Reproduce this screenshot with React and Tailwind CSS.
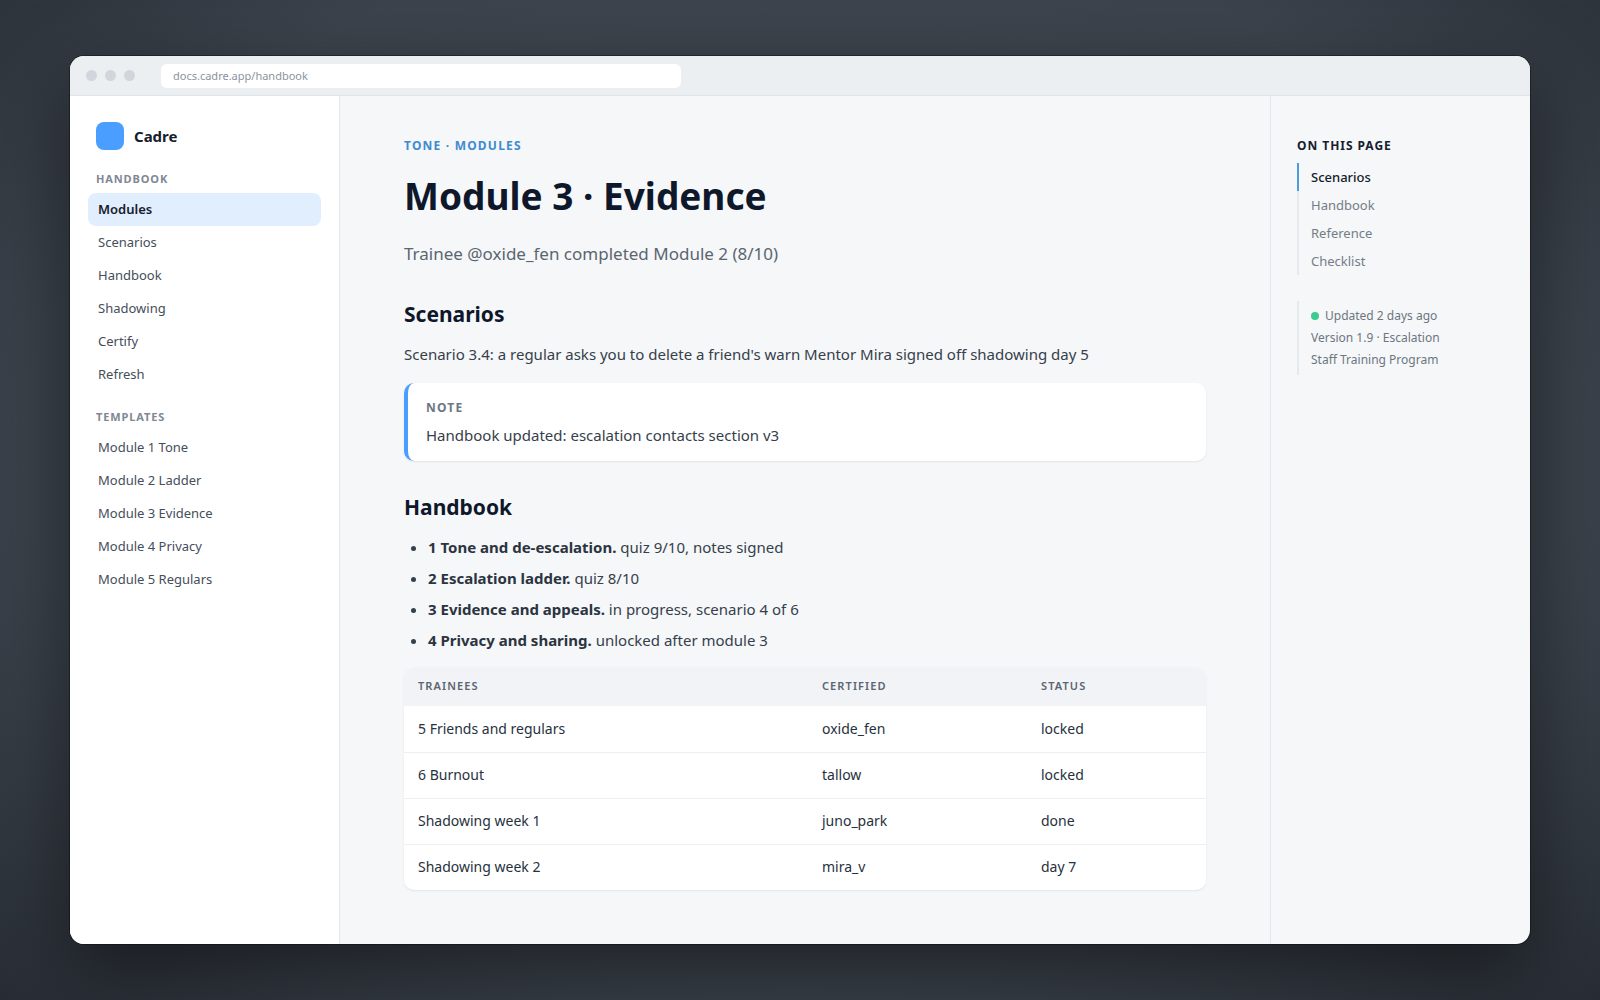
const nav = [
  { title: 'Handbook', items: ['Modules', 'Scenarios', 'Handbook', 'Shadowing', 'Certify', 'Refresh'] },
  { title: 'Templates', items: ['Module 1 Tone', 'Module 2 Ladder', 'Module 3 Evidence', 'Module 4 Privacy', 'Module 5 Regulars'] },
];

const checklist = [
  ['1 Tone and de-escalation.', 'quiz 9/10, notes signed'],
  ['2 Escalation ladder.', 'quiz 8/10'],
  ['3 Evidence and appeals.', 'in progress, scenario 4 of 6'],
  ['4 Privacy and sharing.', 'unlocked after module 3'],
];

const rows = [
  ['5 Friends and regulars', 'oxide_fen', 'locked'],
  ['6 Burnout', 'tallow', 'locked'],
  ['Shadowing week 1', 'juno_park', 'done'],
  ['Shadowing week 2', 'mira_v', 'day 7'],
];

const toc = ['Scenarios', 'Handbook', 'Reference', 'Checklist'];

function BrowserBar() {
  return (
    <div className="flex h-10 shrink-0 items-center border-b border-[#e1e5e9] bg-[#eceff2] px-4">
      <div className="flex gap-2">
        <span className="size-[11px] rounded-full bg-[#d2d6dc]" />
        <span className="size-[11px] rounded-full bg-[#d2d6dc]" />
        <span className="size-[11px] rounded-full bg-[#d2d6dc]" />
      </div>
      <input
        type="text"
        aria-label="Address"
        defaultValue="docs.cadre.app/handbook"
        className="ml-[26px] h-6 w-full max-w-[520px] rounded-md bg-white px-3 text-[11px] text-[#8a949e] outline-none"
      />
    </div>
  );
}

function Sidebar() {
  const [active] = nav[0].items;
  return (
    <aside className="w-[270px] shrink-0 border-r border-[#e4e8eb] bg-white px-[18px] pt-[26px] pb-6">
      <div className="flex items-center gap-2.5 px-2">
        <span className="size-7 rounded-lg bg-[#4a9eff]" />
        <span className="text-[15px] font-bold text-[#16202c]">Cadre</span>
      </div>
      <nav className="mt-[21px] space-y-[18px]">
        {nav.map(group => (
          <div key={group.title}>
            <h2 className="mb-1.5 px-2 text-[11px] leading-4 font-bold tracking-[0.08em] text-[#7f8894] uppercase">
              {group.title}
            </h2>
            <ul>
              {group.items.map(item => (
                <li key={item}>
                  <a
                    href="#"
                    className={
                      item === active
                        ? 'block rounded-lg bg-[#e1eefe] px-2.5 text-[13px] leading-[33px] font-semibold text-[#16202c]'
                        : 'block rounded-lg px-2.5 text-[13px] leading-[33px] text-[#454e5a]'
                    }
                  >
                    {item}
                  </a>
                </li>
              ))}
            </ul>
          </div>
        ))}
      </nav>
    </aside>
  );
}

function Article() {
  return (
    <main className="min-w-0 flex-1 px-16 pt-10 pb-12">
      <p className="text-xs leading-5 font-bold tracking-widest text-[#3d8bd0] uppercase">Tone · Modules</p>
      <h1 className="mt-4 text-[37px] leading-[48px] font-bold text-[#0f172a]">Module 3 · Evidence</h1>
      <p className="mt-5 text-[17px] leading-7 text-[#5b6570]">Trainee @oxide_fen completed Module 2 (8/10)</p>

      <h2 className="mt-8 text-[21px] leading-7 font-bold text-[#0f172a]">Scenarios</h2>
      <p className="mt-3 text-[15px] leading-7 text-[#36404b]">
        Scenario 3.4: a regular asks you to delete a friend's warn Mentor Mira signed off shadowing day 5
      </p>
      <div className="mt-[15px] rounded-[10px] border-l-4 border-[#4a9eff] bg-white px-[18px] pt-[15px] pb-3 shadow-[0_1px_2px_rgba(15,23,42,0.08)]">
        <p className="text-xs leading-5 font-bold tracking-widest text-[#6d7681] uppercase">Note</p>
        <p className="mt-[3px] text-[15px] leading-7 text-[#36404b]">Handbook updated: escalation contacts section v3</p>
      </div>

      <h2 className="mt-8 text-[21px] leading-7 font-bold text-[#0f172a]">Handbook</h2>
      <ul className="mt-3 list-disc space-y-[3px] pl-6 text-[15px] leading-7 text-[#36404b]">
        {checklist.map(([name, note]) => (
          <li key={name}>
            <strong className="font-bold text-[#2b3440]">{name}</strong> {note}
          </li>
        ))}
      </ul>

      <div className="mt-[13px] overflow-hidden rounded-[10px] bg-white shadow-[0_1px_2px_rgba(15,23,42,0.08)]">
        <table className="w-full table-fixed text-left">
          <thead className="bg-[#f1f3f7]">
            <tr className="h-[39px] text-[11px] tracking-widest text-[#5b6570] uppercase">
              <th className="px-3.5 font-semibold">Trainees</th>
              <th className="w-[219px] px-3.5 font-semibold">Certified</th>
              <th className="w-[179px] px-3.5 font-semibold">Status</th>
            </tr>
          </thead>
          <tbody className="divide-y divide-[#eceff2] text-sm text-[#27313d]">
            {rows.map(row => (
              <tr key={row[0]} className="h-[46px]">
                {row.map((cell, i) => (
                  <td key={i} className="px-3.5">{cell}</td>
                ))}
              </tr>
            ))}
          </tbody>
        </table>
      </div>
    </main>
  );
}

function OnThisPage() {
  return (
    <aside className="w-[260px] shrink-0 border-l border-[#e4e8eb] px-[26px] pt-10">
      <h2 className="text-xs leading-5 font-bold tracking-[0.08em] text-[#16202c] uppercase">On this page</h2>
      <ul className="mt-[7px]">
        {toc.map((item, i) => (
          <li key={item}>
            <a
              href="#"
              className={
                i === 0
                  ? 'block border-l-2 border-[#4f9be0] pl-3 text-[13px] leading-7 font-medium text-[#16202c]'
                  : 'block border-l-2 border-[#e6e9ec] pl-3 text-[13px] leading-7 text-[#747d87]'
              }
            >
              {item}
            </a>
          </li>
        ))}
      </ul>
      <div className="mt-[26px] border-l-2 border-[#e6e9ec] py-1 pl-3 text-xs leading-[22px] text-[#6d7681]">
        <p className="flex items-center gap-1.5">
          <span className="size-2 rounded-full bg-[#3ccb8f]" />
          Updated 2 days ago
        </p>
        <p>Version 1.9 · Escalation</p>
        <p>Staff Training Program</p>
      </div>
    </aside>
  );
}

export default function App() {
  return (
    <div className="flex min-h-screen bg-[#343a44] bg-[radial-gradient(ellipse_at_50%_45%,#424953_0%,#3c434c_68%,#282d35_100%)] px-[70px] py-14 font-['Noto_Sans',sans-serif]">
      <div className="flex min-w-0 flex-1 flex-col overflow-hidden rounded-[14px] bg-[#f5f7f9] shadow-[0_0_0_1px_rgba(0,0,0,0.35),0_30px_80px_rgba(0,0,0,0.5)]">
        <BrowserBar />
        <div className="flex flex-1">
          <Sidebar />
          <Article />
          <OnThisPage />
        </div>
      </div>
    </div>
  );
}
